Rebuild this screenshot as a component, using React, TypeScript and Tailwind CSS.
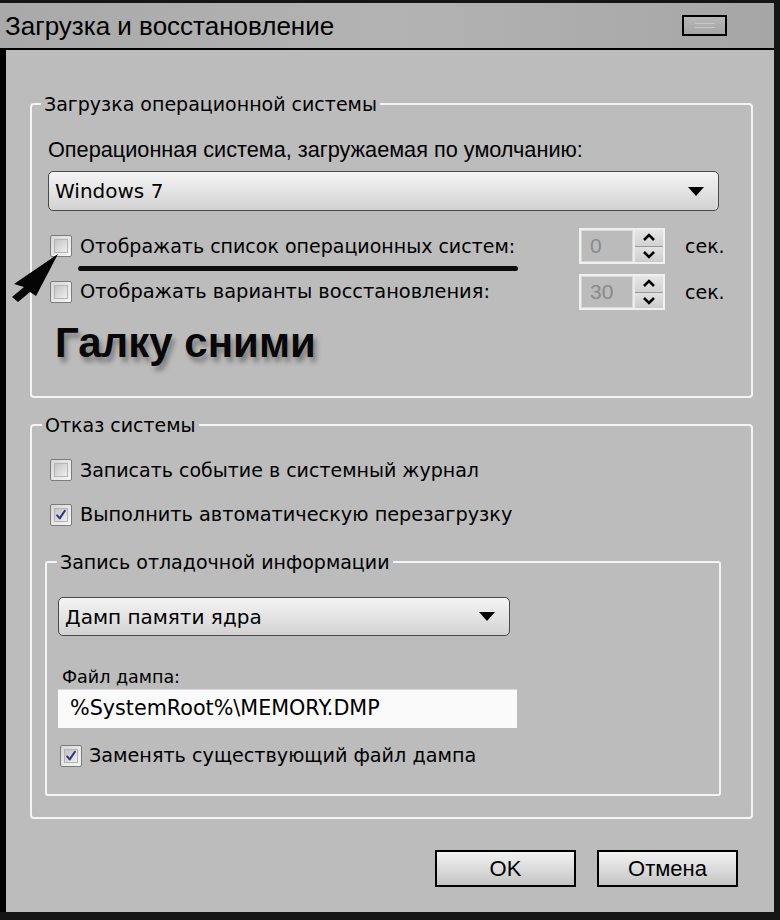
import React from 'react';

const sans = "font-['DejaVu_Sans',sans-serif]";
const lib = "font-['Liberation_Sans',Arial,sans-serif]";

const CheckBox: React.FC<{ checked?: boolean }> = ({ checked }) => (
  <div className="w-[22px] h-[22px] shrink-0 border border-[#7c7c7c] rounded-[2px] bg-gradient-to-br from-[#d6d6d6] to-[#f6f6f6] p-[3px]">
    <div className="relative w-full h-full border border-[#b4b4b4] bg-gradient-to-br from-[#c4c4c4] to-[#efefef]">
      {checked && (
        <svg viewBox="0 0 14 14" className="absolute inset-0 w-full h-full">
          <path d="M2.5 7.5 L5.5 11 L11.5 2" fill="none" stroke="#2e3782" strokeWidth="2.4" strokeLinecap="round" strokeLinejoin="round" />
        </svg>
      )}
    </div>
  </div>
);

const Spinner: React.FC<{ value: string }> = ({ value }) => (
  <div className="w-[86px] h-[36px] border-2 border-[#f0f0f0] flex bg-[#c6c6c6]">
    <div className={`flex-1 border border-[#d8d8d8] bg-[#bbbbbb] flex items-center pl-[8px] text-[21px] text-[#8a8a8a] ${lib}`}>{value}</div>
    <div className="w-[30px] flex flex-col border-l-2 border-[#ececec]">
      <div className="flex-1 flex items-center justify-center bg-gradient-to-b from-[#e6e6e6] to-[#d2d2d2] border-b border-[#9a9a9a]">
        <svg width="14" height="9" viewBox="0 0 14 9"><path d="M2 7 L7 2 L12 7" fill="none" stroke="#000" strokeWidth="2.6" /></svg>
      </div>
      <div className="flex-1 flex items-center justify-center bg-gradient-to-b from-[#e2e2e2] to-[#cccccc]">
        <svg width="14" height="9" viewBox="0 0 14 9"><path d="M2 2 L7 7 L12 2" fill="none" stroke="#000" strokeWidth="2.6" /></svg>
      </div>
    </div>
  </div>
);

const Combo: React.FC<{ text: string; className: string }> = ({ text, className }) => (
  <div className={`flex items-center justify-between border-[1.5px] border-[#4a4a4a] rounded-[5px] bg-gradient-to-b from-[#f4f4f4] via-[#e4e4e4] to-[#d2d2d2] pl-[6px] pr-[14px] ${className}`}>
    <span className={`text-[20px] text-black ${sans}`}>{text}</span>
    <svg width="16" height="9" viewBox="0 0 16 9"><path d="M0 0 H16 L8 9 Z" fill="#000" /></svg>
  </div>
);

const Legend: React.FC<{ text: string; className?: string }> = ({ text, className = '' }) => (
  <legend className={`px-[3px] leading-[24px] text-[19px] text-black ${sans} ${className}`}>{text}</legend>
);

export default function App() {
  return (
    <div className="w-[780px] h-[920px] bg-[#151515] pt-[3px] pr-[6px] pb-[8px] flex flex-col overflow-hidden">
      {/* title bar */}
      <div className="h-[45px] shrink-0 flex items-center justify-between bg-gradient-to-r from-[#a9a9a9] via-[#b3b3b3] to-[#a6a6a6] pl-[5px] pr-[47px]">
        <span className={`text-[26px] leading-none text-black ${lib}`}>Загрузка и восстановление</span>
        <div className="w-[45px] h-[21px] border-2 border-black bg-gradient-to-b from-[#b8b8b8] to-[#a4a4a4] flex flex-col items-center justify-center gap-[3px]">
          <div className="w-[20px] h-px bg-[#c8c8c8]" />
          <div className="w-[20px] h-px bg-[#c8c8c8]" />
        </div>
      </div>
      <div className="h-[2px] shrink-0 bg-black" />

      {/* body */}
      <div className="flex-1 border-l-[6px] border-black bg-[#bcbcbc] pl-[24px] pr-[21px] flex flex-col relative">
        <fieldset className="mt-[42px] h-[306px] border-2 border-[#f4f4f4] rounded-[4px] pl-[16px] pr-[31px] flex flex-col">
          <Legend text="Загрузка операционной системы" className="ml-[-7px]" />
          <div className={`mt-[22px] h-[24px] leading-[24px] text-[21.7px] text-black ${lib}`}>Операционная система, загружаемая по умолчанию:</div>
          <Combo text="Windows 7" className="mt-[9px] h-[40px] w-[671px]" />

          <div className="mt-[17px] h-[36px] flex items-center">
            <div className="ml-[2px]"><CheckBox /></div>
            <span className={`ml-[8px] text-[19px] text-black ${sans}`}>Отображать список операционных систем:</span>
            <div className="ml-auto"><Spinner value="0" /></div>
            <span className={`w-[55px] pl-[20px] text-[19px] text-black ${sans}`}>сек.</span>
          </div>
          <div className="mt-[2px] ml-[30px] w-[440px] h-[5px] rounded-full bg-[#0c0c0c]" />
          <div className="mt-[3px] h-[36px] flex items-center">
            <div className="ml-[2px]"><CheckBox /></div>
            <span className={`ml-[8px] text-[19.4px] text-black ${sans}`}>Отображать варианты восстановления:</span>
            <div className="ml-auto"><Spinner value="30" /></div>
            <span className={`w-[55px] pl-[20px] text-[19px] text-black ${sans}`}>сек.</span>
          </div>
          <div className={`mt-[9px] ml-[7px] h-[48px] leading-[48px] text-[42px] font-bold text-[#080808] [text-shadow:3px_5px_5px_rgba(0,0,0,0.35)] ${lib}`}>Галку сними</div>
        </fieldset>

        <fieldset className="mt-[15px] h-[406px] border-2 border-[#f4f4f4] rounded-[4px] pl-[13px] pr-[30px] flex flex-col">
          <Legend text="Отказ системы" className="ml-[-3px]" />
          <div className="mt-[15px] h-[36px] flex items-center">
            <div className="ml-[5px]"><CheckBox /></div>
            <span className={`ml-[8px] text-[19px] text-black ${sans}`}>Записать событие в системный журнал</span>
          </div>
          <div className="mt-[9px] h-[36px] flex items-center">
            <div className="ml-[5px]"><CheckBox checked /></div>
            <span className={`ml-[8px] text-[19.3px] text-black ${sans}`}>Выполнить автоматическую перезагрузку</span>
          </div>

          <fieldset className="mt-[17px] h-[246px] border-2 border-[#f4f4f4] rounded-[3px] pl-[11px] flex flex-col">
            <Legend text="Запись отладочной информации" className="ml-[-1px]" />
            <Combo text="Дамп памяти ядра" className="mt-[23px] h-[39px] w-[452px]" />
            <div className={`mt-[29px] ml-[4px] h-[24px] leading-[24px] text-[17.5px] text-black ${sans}`}>Файл дампа:</div>
            <div className={`h-[39px] w-[459px] bg-[#fafafa] border-t border-[#d8d8d8] flex items-center pl-[12px] text-[20.7px] text-black ${sans}`}>%SystemRoot%\MEMORY.DMP</div>
            <div className="mt-[14px] h-[28px] flex items-center">
              <div className="ml-[2px]"><CheckBox checked /></div>
              <span className={`ml-[7px] text-[19.2px] text-black ${sans}`}>Заменять существующий файл дампа</span>
            </div>
          </fieldset>
        </fieldset>

        <div className="mt-[31px] mr-[15px] flex justify-end gap-[21px]">
          <button className={`w-[141px] h-[37px] border-2 border-black bg-gradient-to-b from-[#f2f2f2] via-[#dcdcdc] to-[#c4c4c4] text-[22px] text-black ${lib}`}>OK</button>
          <button className={`w-[141px] h-[37px] border-2 border-black bg-gradient-to-b from-[#f2f2f2] via-[#dcdcdc] to-[#c4c4c4] text-[22px] text-black ${lib}`}>Отмена</button>
        </div>

        {/* hand-drawn pointer over the first checkbox */}
        <svg className="absolute left-[-6px] top-[200px]" width="70" height="60" viewBox="0 0 70 60">
          <path d="M58 4 L14 34 L24 37 L12 47 L18 52 L30 42 L36 46 Z" fill="#050505" />
        </svg>
      </div>
    </div>
  );
}
